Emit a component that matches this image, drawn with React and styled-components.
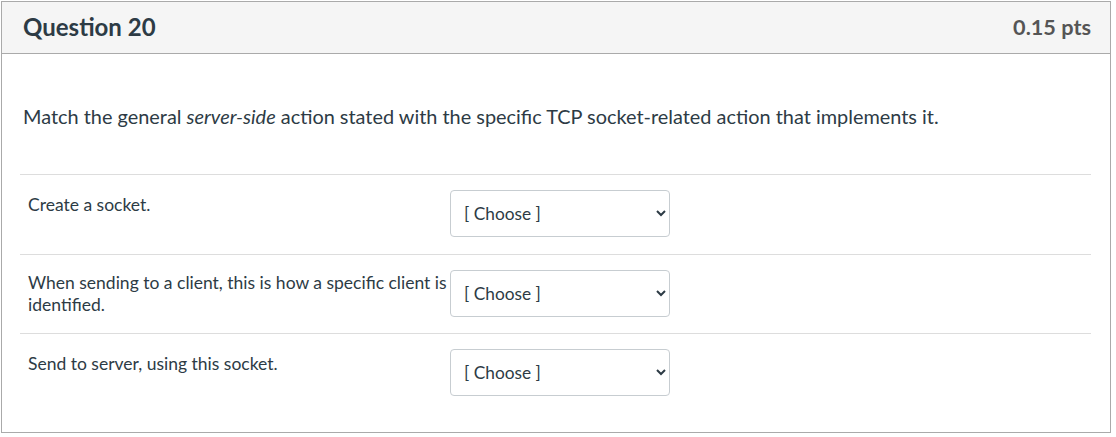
import React from 'react'
import styled, { createGlobalStyle } from 'styled-components'

const GlobalStyle = createGlobalStyle`
  body {
    margin: 0;
    background: #fff;
    font-family: Lato, "Open Sans", "Liberation Sans", sans-serif;
    color: #2d3b45;
  }
`

const Page = styled.div`
  padding: 1px 5px 0 1px;
`

const Question = styled.div`
  border: 1px solid #aaa;
  height: 432px;
  box-sizing: border-box;
`

const Header = styled.div`
  display: flex;
  align-items: center;
  justify-content: space-between;
  height: 51px;
  padding: 0 19px 0 21px;
  background: #f5f5f5;
  border-bottom: 1px solid #aaa;
`

const Title = styled.h2`
  margin: 0 0 2px;
  font-size: 24px;
  font-weight: 700;
  color: #2d3b45;
`

const Points = styled.span`
  margin-bottom: 2px;
  font-size: 21.7px;
  font-weight: 700;
  color: #555;
`

const Body = styled.div`
  padding: 0 19px 0 18px;
`

const Prompt = styled.p`
  margin: 0;
  padding: 48px 2px 44px 3px;
  font-size: 19.9px;
  line-height: 28px;
`

const Matches = styled.div`
  border-top: 1px solid #ddd;
`

const Row = styled.div`
  display: grid;
  grid-template-columns: 428px 220px;
  column-gap: 2px;
  align-items: center;
  padding: 15px 0 ${p => (p.short ? 16 : 17)}px;
  border-bottom: ${p => (p.last ? 'none' : '1px solid #ddd')};
`

const Label = styled.div`
  min-height: 40px;
  padding-left: 8px;
  font-size: 17.5px;
  line-height: 22px;
`

const Select = styled.select`
  height: 47px;
  width: 220px;
  padding: 0 8px 0 9px;
  border: 1px solid #c7cdd1;
  border-radius: 4px;
  background: #fff;
  color: #2d3b45;
  font-family: Lato, "Open Sans", "Liberation Sans", sans-serif;
  font-size: 17.3px;
`

const rows = [
  'Create a socket.',
  'When sending to a client, this is how a specific client is identified.',
  'Send to server, using this socket.',
]

export default function App() {
  return (
    <Page>
      <GlobalStyle />
      <Question>
        <Header>
          <Title>Question 20</Title>
          <Points>0.15 pts</Points>
        </Header>
        <Body>
          <Prompt>
            Match the general <em>server-side</em> action stated with the specific TCP
            socket-related action that implements it.
          </Prompt>
          <Matches>
            {rows.map((text, i) => (
              <Row key={i} short={i === 1} last={i === rows.length - 1}>
                <Label>{text}</Label>
                <Select defaultValue="">
                  <option value="">[ Choose ]</option>
                </Select>
              </Row>
            ))}
          </Matches>
        </Body>
      </Question>
    </Page>
  )
}
